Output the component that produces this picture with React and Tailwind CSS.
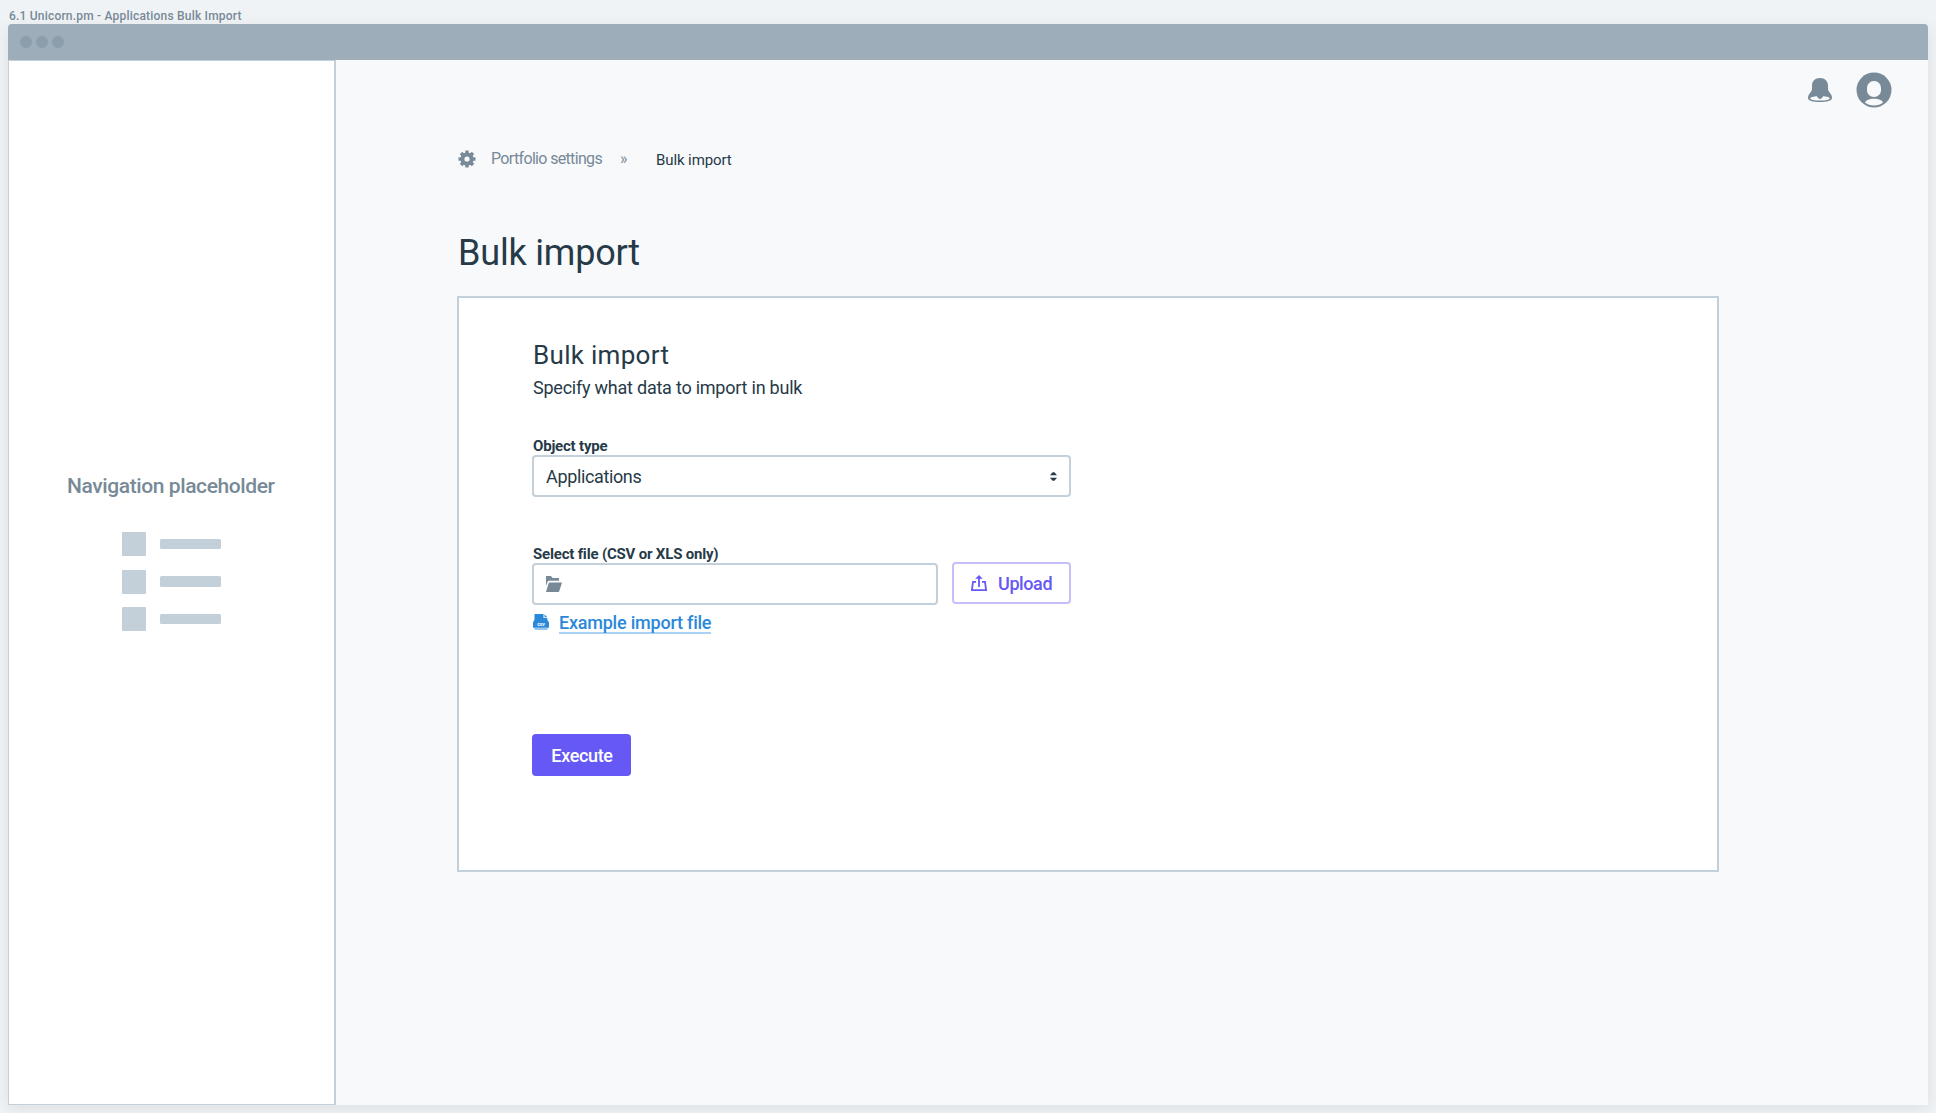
import React from "react";

function BellIcon() {
  return (
    <svg viewBox="0 0 24 24" className="h-6 w-6">
      <path
        d="M12 0C7 0 4 3.200 4 7.500V11.500C4 13.600 0 15.800 0 20C0 22.800 5 24 12 24S24 22.800 24 20C24 15.800 20 13.600 20 11.500V7.500C20 3.200 17 0 12 0Z"
        fill="#788997"
      />
      <ellipse cx="12" cy="20.300" rx="9.900" ry="2.300" fill="#f7f9fb" />
      <path d="M8 17.500C9.600 18.300 9.600 20.900 12 20.900S14.400 18.300 16 17.500Z" fill="#788997" />
    </svg>
  );
}

function AvatarIcon() {
  return (
    <svg viewBox="0 0 36 36" className="h-9 w-9">
      <circle cx="18" cy="18" r="17.500" fill="#788997" />
      <rect x="11" y="9" width="14" height="16" rx="6.800" fill="#f7f9fb" />
      <path
        d="M9 30.600C10 28 13.500 26.800 18 26.800S26 28 27 30.600C25 32.600 21.500 33.600 18 33.600S11 32.600 9 30.600Z"
        fill="#f7f9fb"
      />
    </svg>
  );
}

const TEETH = [0, 45, 90, 135, 180, 225, 270, 315];

function GearIcon() {
  return (
    <svg viewBox="0 0 18 18" className="ml-px h-[18px] w-[18px]">
      {TEETH.map((angle) => (
        <rect key={angle} x="7.300" y="0.500" width="3.400" height="4" fill="#788997" transform={`rotate(${angle} 9 9)`} />
      ))}
      <circle cx="9" cy="9" r="4.600" fill="none" stroke="#788997" strokeWidth="4" />
    </svg>
  );
}

function FolderIcon() {
  return (
    <svg viewBox="0 0 16 16" className="h-4 w-4" fill="#788997">
      <path d="M0 0H5L6.500 2H13V4.800H3.200C2.400 4.800 1.800 5.200 1.500 6L0 9.800Z" />
      <path d="M3.600 6.600H16L13.400 14.800C13.200 15.600 12.800 16 12 16H0L2.600 7.600C2.800 6.900 3.100 6.600 3.600 6.600Z" />
    </svg>
  );
}

function CsvIcon() {
  return (
    <svg viewBox="0 0 16 17" className="h-[17px] w-4">
      <path d="M1.500 0H10.500V4H14.200V5.500L16 8.500V13.800H0V8.500L1.500 5.500Z" fill="#2b88d9" />
      <path d="M11.500 0.300L14.200 3.200H11.500Z" fill="#2b88d9" />
      <path d="M1.500 15H14.500" stroke="#2b88d9" strokeWidth="1.400" opacity="0.700" />
      <text
        x="8"
        y="11.700"
        textAnchor="middle"
        fontSize="5"
        fontWeight="700"
        fill="#ffffff"
        fontFamily="Roboto, sans-serif"
      >
        csv
      </text>
    </svg>
  );
}

function UploadIcon() {
  return (
    <svg viewBox="0 0 16 16" className="h-4 w-4" fill="none" stroke="#6558f5" strokeWidth="1.800">
      <path d="M5 6.900H2L0.900 15.100H15.100L14 6.900H11" />
      <path d="M8 12V2.500" />
      <path d="M8 0L11.800 3.800H4.200Z" fill="#6558f5" stroke="none" />
    </svg>
  );
}

function SortIcon() {
  return (
    <svg viewBox="0 0 7 9" className="h-[9px] w-[7px]" fill="#263a48">
      <path d="M0 3.200L2.600 0.300H4.400L7 3.200Z" />
      <path d="M0 5.800H7L4.400 8.700H2.600Z" />
    </svg>
  );
}

function Sidebar() {
  return (
    <aside className="w-[328px] shrink-0 border border-r-2 border-[#c3cfd9] bg-white pt-[411px]">
      <p className="pl-[58px] text-[21px] leading-7 font-medium tracking-[-0.4px] text-[#788997]">
        Navigation placeholder
      </p>
      <ul className="mt-8 flex flex-col gap-[13.5px] pl-[113px]">
        {[1, 2, 3].map((row) => (
          <li key={row} className="flex h-6 items-center">
            <span className="h-6 w-6 rounded-[1px] bg-[#c3cfd9]" />
            <span className="ml-[13.5px] h-[10.5px] w-[61.5px] rounded-[1.5px] bg-[#c3cfd9]" />
          </li>
        ))}
      </ul>
    </aside>
  );
}

function ImportCard() {
  return (
    <section className="mt-[19px] h-[576px] w-[1262px] border-2 border-[#c3cfd9] bg-white pt-[41px] pl-[73px]">
      <h2 className="pl-px text-[26px] leading-8 tracking-[0.3px]">Bulk import</h2>
      <p className="mt-[5px] pl-px text-[18px] leading-6 tracking-[-0.23px]">Specify what data to import in bulk</p>

      <p className="mt-[37px] pl-px text-[15px] leading-[18px] font-bold tracking-[-0.2px]">Object type</p>
      <button className="flex h-[42px] w-[539px] items-center justify-between rounded border-2 border-[#c3cfd9] pr-3 pl-3 text-[18px] tracking-[-0.36px]">
        <span>Applications</span>
        <SortIcon />
      </button>

      <p className="mt-12 pl-px text-[15px] leading-[18px] font-bold tracking-[-0.19px]">
        Select file (CSV or XLS only)
      </p>
      <div className="flex h-[42px]">
        <div className="flex w-[406px] items-center rounded border-2 border-[#c3cfd9] pl-3">
          <FolderIcon />
        </div>
        <button className="-mt-px mb-px ml-[14px] flex w-[119px] items-center gap-[11px] rounded border-2 border-[#c5c0fb] pl-[17px] text-[18px] font-medium tracking-[-0.4px] text-[#6558f5]">
          <UploadIcon />
          <span>Upload</span>
        </button>
      </div>

      <div className="mt-[9px] flex items-start gap-[10px] pl-px">
        <CsvIcon />
        <a className="border-b-2 border-[#a9d1f5] text-[18px] leading-[18px] font-medium tracking-[-0.22px] text-[#2b88d9]">
          Example import file
        </a>
      </div>

      <button className="mt-[100px] flex h-[42px] w-[99px] items-center justify-center rounded bg-[#6558f5] pl-px text-[18px] font-medium tracking-[-0.35px] text-white">
        Execute
      </button>
    </section>
  );
}

export default function App() {
  return (
    <div className="h-[1113px] w-[1936px] overflow-hidden bg-[#eff3f6] px-2 pt-2 font-['Roboto',sans-serif] text-[#263a48]">
      <p className="pl-px text-[12px] leading-4 font-medium tracking-[0.2px] text-[#788997]">
        6.1 Unicorn.pm - Applications Bulk Import
      </p>
      <div className="flex h-[1081px] flex-col rounded-t shadow-[0_4px_16px_rgba(0,0,0,0.08)]">
        <div className="flex h-9 shrink-0 items-center gap-1 rounded-t bg-[#9dadb9] pl-3">
          <span className="h-3 w-3 rounded-full bg-[#8c9dac]" />
          <span className="h-3 w-3 rounded-full bg-[#8c9dac]" />
          <span className="h-3 w-3 rounded-full bg-[#8c9dac]" />
        </div>
        <div className="flex min-h-0 flex-1">
          <Sidebar />
          <main className="flex-1 bg-[#f7f9fb]">
            <header className="flex items-center justify-end gap-6 pt-3 pr-9">
              <BellIcon />
              <AvatarIcon />
            </header>
            <div className="pt-[39px] pl-[121px]">
              <nav className="flex h-6 items-center">
                <GearIcon />
                <span className="ml-[15px] w-[128px] text-[16px] leading-6 tracking-[-0.66px] text-[#788997]">
                  Portfolio settings
                </span>
                <span className="w-[37px] pl-px text-[16px] leading-6 text-[#788997]">»</span>
                <span className="mt-0.5 text-[15px] leading-6 tracking-[-0.1px]">Bulk import</span>
              </nav>
              <h1 className="mt-[58px] pl-px text-[36px] leading-[48px] tracking-[-0.2px]">Bulk import</h1>
              <ImportCard />
            </div>
          </main>
        </div>
      </div>
    </div>
  );
}
